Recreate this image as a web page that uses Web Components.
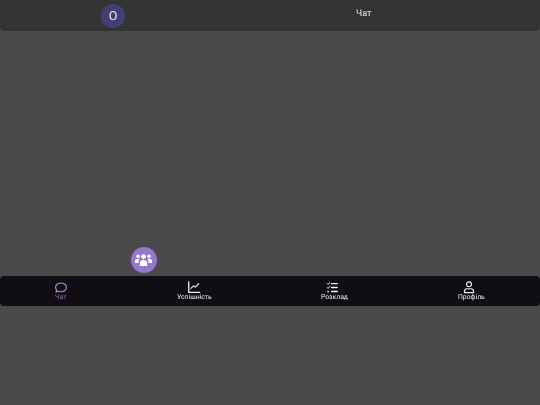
<!DOCTYPE html>
<html lang="uk"><head><meta charset="utf-8"><title>Чат</title>
<style>
html,body{margin:0;height:100%;background:#4a484a;font-family:Roboto,"Noto Sans",sans-serif}
</style></head><body>
<app-shell>
  <app-bar title="Чат" initial="О"></app-bar>
  <chat-area></chat-area>
  <bottom-nav>
    <nav-item label="Чат" icon="chat" active></nav-item>
    <nav-item label="Успішність" icon="chart"></nav-item>
    <nav-item label="Розклад" icon="tasks"></nav-item>
    <nav-item label="Профіль" icon="user"></nav-item>
  </bottom-nav>
</app-shell>
<script>
function def(name, html, init){
  customElements.define(name, class extends HTMLElement{
    constructor(){super();this.attachShadow({mode:'open'}).innerHTML=html;}
    connectedCallback(){ if(init) init(this); }
  });
}
def('app-shell',`<style>:host{display:flex;flex-direction:column;width:540px;height:405px;overflow:hidden}</style><slot></slot>`);
def('app-bar',`<style>
:host{display:flex;box-sizing:border-box;height:31px;background:#333;border-radius:0 0 5px 5px;padding:3.500px 0 0 101px}
.av{width:24px;height:24px;border-radius:50%;background:#423f73;color:#eeeaf7;font-size:12.500px;display:flex;align-items:center;justify-content:center;text-rendering:geometricPrecision;will-change:transform}
.t{margin:3.500px 0 0 230.500px;color:#ececec;font-size:9px;line-height:15px;height:15px;text-rendering:geometricPrecision;will-change:transform}
</style><div class="av" id="a"></div><div class="t" id="t"></div>`,el=>{
  el.shadowRoot.getElementById('a').textContent=el.getAttribute('initial');
  el.shadowRoot.getElementById('t').textContent=el.getAttribute('title');
});
def('chat-area',`<style>
:host{display:block;position:relative;height:245px}
.fab{position:absolute;left:130.500px;top:215.500px;width:26px;height:26px;border-radius:50%;background:#9378cb;display:flex;align-items:center;justify-content:center}
</style><div class="fab"><svg width="17" height="14" viewBox="0 0 17 14" fill="#fff">
<circle cx="8.500" cy="3.600" r="2.400"/><circle cx="3" cy="3.200" r="1.800"/><circle cx="14" cy="3.200" r="1.800"/>
<path d="M4.800 13v-3c0-2 1.600-3 3.700-3s3.700 1 3.700 3v3z"/>
<path d="M0 10V8c0-1.600 1.300-2.300 3-2.300.6 0 1.100.1 1.600.3C3.700 6.800 3.500 8 3.500 10z"/>
<path d="M17 10V8c0-1.600-1.300-2.300-3-2.300-.6 0-1.100.1-1.600.3.900.8 1.100 2 1.100 4z"/>
</svg></div>`);
def('bottom-nav',`<style>
:host{display:flex;justify-content:space-around;box-sizing:border-box;height:30px;background:#100e12;border-radius:4px;padding-right:1px}
::slotted(:first-child){margin-left:-1px}
</style><slot></slot>`);
const icons={
chat:'<path d="M3.200 10.500C2.300 9.600 1.800 8.500 1.800 7.300 1.800 4.500 4.600 2.300 8 2.300s6.200 2.200 6.200 5-2.800 5-6.200 5c-1 0-1.900-.2-2.700-.5-.9.500-2 .8-3.100.7.600-.5 1-1.100 1-1.800z"/>',
chart:'<path d="M2 1v12h12.500" stroke-width="1.500"/><path d="M4.500 8.500 7.500 5.500 9.500 7 13.500 3"/>',
tasks:'<path d="M7.500 3h6.500M7.500 7.500h6.500M7.500 12h6.500" stroke-width="1.600"/><path d="M2.500 3 3.500 4 5.500 1.700M2.500 7.500 3.500 8.500 5.500 6.200" stroke-width="1.100"/><circle cx="3.500" cy="12" r="1" fill="currentColor" stroke="none"/>',
user:'<circle cx="8" cy="3.800" r="2.800"/><path d="M2.800 13.300v-1.200c0-1.900 1.600-3.200 3.200-3.200h4c1.600 0 3.200 1.300 3.200 3.200v1.200z"/>'
};
def('nav-item',`<style>
:host{display:flex;flex-direction:column;align-items:center;color:#f0eff2;padding-top:4.500px}
:host([active]){color:#a98bdc}
:host([active]) span{opacity:.8}
:host([icon=chart]) svg{margin-right:1px}
:host([icon=tasks]) svg{margin-right:5px}
:host([icon=user]) svg{margin-right:4px}
svg{display:block;width:14px;height:12.250px;overflow:visible}
span{font-size:6.800px;line-height:8px;white-space:nowrap;text-rendering:geometricPrecision;will-change:transform}
</style><svg viewBox="0 0 16 14" fill="none" stroke="currentColor" stroke-width="1.300" stroke-linecap="round" stroke-linejoin="round" id="i"></svg><span id="l"></span>`,el=>{
  el.shadowRoot.getElementById('l').textContent=el.getAttribute('label');
  el.shadowRoot.getElementById('i').innerHTML=icons[el.getAttribute('icon')];
});
</script>
</body></html>
